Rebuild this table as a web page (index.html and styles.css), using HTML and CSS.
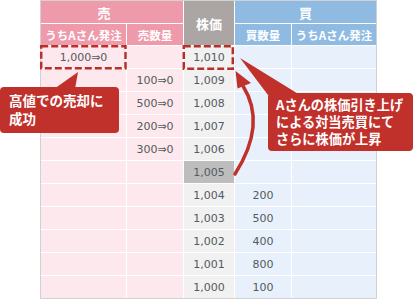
FILE: index.html
```html
<!DOCTYPE html>
<html lang="ja">
<head>
<meta charset="utf-8">
<link rel="stylesheet" href="styles.css">
</head>
<body>
<div class="stage">
  <div class="board">
    <div class="h1 hs span2 sell-title">売</div>
    <div class="h1 hp rows2">株価</div>
    <div class="h1 hb span2">買</div>
    <div class="h2 hs">うちAさん発注</div>
    <div class="h2 hs">売数量</div>
    <div class="h2 hb">買数量</div>
    <div class="h2 hb">うちAさん発注</div>

    <div class="c s">1,000⇒0</div><div class="c s"></div><div class="c p">1,010</div><div class="c b"></div><div class="c b"></div>
    <div class="c s"></div><div class="c s">100⇒0</div><div class="c p">1,009</div><div class="c b"></div><div class="c b"></div>
    <div class="c s"></div><div class="c s">500⇒0</div><div class="c p">1,008</div><div class="c b"></div><div class="c b"></div>
    <div class="c s"></div><div class="c s">200⇒0</div><div class="c p">1,007</div><div class="c b"></div><div class="c b"></div>
    <div class="c s"></div><div class="c s">300⇒0</div><div class="c p">1,006</div><div class="c b"></div><div class="c b"></div>
    <div class="c s"></div><div class="c s"></div><div class="c p hl">1,005</div><div class="c b"></div><div class="c b"></div>
    <div class="c s"></div><div class="c s"></div><div class="c p">1,004</div><div class="c b">200</div><div class="c b"></div>
    <div class="c s"></div><div class="c s"></div><div class="c p">1,003</div><div class="c b">500</div><div class="c b"></div>
    <div class="c s"></div><div class="c s"></div><div class="c p">1,002</div><div class="c b">400</div><div class="c b"></div>
    <div class="c s"></div><div class="c s"></div><div class="c p">1,001</div><div class="c b">800</div><div class="c b"></div>
    <div class="c s"></div><div class="c s"></div><div class="c p">1,000</div><div class="c b">100</div><div class="c b"></div>
  </div>

  <svg class="overlay" width="418" height="300" viewBox="0 0 418 300">
    <rect x="41.2" y="46.2" width="84.3" height="22" fill="none" stroke="#b9302b" stroke-width="2.5" stroke-dasharray="7 3"/>
    <rect x="183.8" y="46.3" width="49" height="22.4" fill="none" stroke="#b9302b" stroke-width="2.5" stroke-dasharray="7 3"/>
    <polygon points="78,72 54,89 75,89" fill="#c1312b"/>
    <polygon points="240,58 268,95 300,95" fill="#c1312b"/>
    <path d="M235,174 Q267,124 243,86" fill="none" stroke="#c1312b" stroke-width="3.5" stroke-linecap="round"/>
    <polygon points="235.5,71 237.5,88.5 251,83" fill="#c1312b"/>
  </svg>

  <div class="callout callout-left">高値での売却に<br>成功</div>
  <div class="callout callout-right">Aさんの株価引き上げ<br>による対当売買にて<br>さらに株価が上昇</div>
</div>
</body>
</html>
```

FILE: styles.css
```css
html, body {
  margin: 0;
  padding: 0;
  background: #ffffff;
}

.stage {
  position: relative;
  width: 418px;
  height: 300px;
  overflow: hidden;
}

.board {
  margin-left: 40px;
  width: 335px;
  display: grid;
  grid-template-columns: 85px 56px 50px 56px 84px;
  grid-template-rows: 22px 21px repeat(11, 22px);
  gap: 1px;
  background: #ffffff;
  border: 1px solid #d2d2d2;
  font-family: "DejaVu Sans", "Noto Sans CJK JP", sans-serif;
}

.board > div {
  display: flex;
  align-items: center;
  justify-content: center;
}

.h1, .h2 {
  color: #ffffff;
  font-family: "Noto Sans CJK JP", sans-serif;
  font-weight: bold;
}

.h1 { font-size: 13px; }
.h2 { font-size: 11.5px; }

.span2 { grid-column: span 2; }
.rows2 { grid-row: span 2; }

.sell-title { padding-right: 16px; }

.hs { background: #ee9aab; }
.hp { background: #aba6a4; }
.hb { background: #8fbbe2; }

.c {
  font-size: 11px;
  color: #545a60;
}

.s { background: #fde9ed; }
.p { background: #f1f1f1; }
.p.hl { background: #bdbdbd; }
.b { background: #e8f1fb; }

.overlay {
  position: absolute;
  left: 0;
  top: 0;
}

.callout {
  position: absolute;
  background: #c1312b;
  color: #ffffff;
  border-radius: 4px;
  font-family: "Noto Sans CJK JP", sans-serif;
  font-weight: bold;
  font-size: 13.5px;
  line-height: 17.5px;
  box-sizing: border-box;
}

.callout-left {
  left: 0;
  top: 87px;
  width: 119px;
  height: 46px;
  padding: 5px 0 0 9px;
}

.callout-right {
  left: 268px;
  top: 93px;
  width: 145px;
  height: 58px;
  padding: 3px 0 0 8px;
  line-height: 17px;
  font-size: 13.2px;
}
```
